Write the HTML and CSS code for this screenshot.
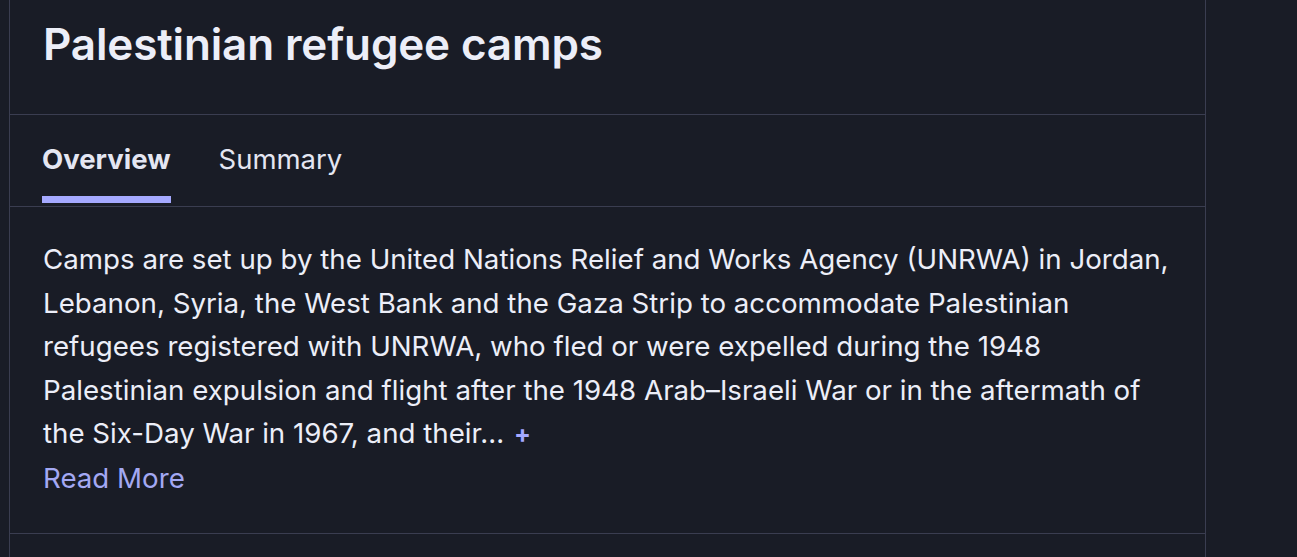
FILE: index.html
```html
<!DOCTYPE html>
<html lang="en">
<head>
<meta charset="utf-8">
<title>Palestinian refugee camps</title>
<link rel="stylesheet" href="styles.css">
</head>
<body>
<main class="card">
  <header class="card-head">
    <h1 class="title">Palestinian refugee camps</h1>
  </header>
  <nav class="tabs">
    <div class="tab tab-active"><span class="tab-label">Overview</span><span class="tab-bar"></span></div>
    <div class="tab"><span class="tab-label">Summary</span><span class="tab-bar"></span></div>
  </nav>
  <section class="body">
    <p class="text">Camps are set up by the United Nations Relief and Works Agency (UNRWA) in Jordan, Lebanon, Syria, the West Bank and the Gaza Strip to accommodate Palestinian refugees registered with UNRWA, who fled or were expelled during the 1948 Palestinian expulsion and flight after the 1948 Arab–Israeli War or in the aftermath of the Six-Day War in 1967, and their… <span class="plus">+</span></p>
    <a class="more" href="#">Read More</a>
  </section>
  <section class="next"></section>
</main>
</body>
</html>
```

FILE: styles.css
```css
html, body {
  margin: 0;
  padding: 0;
  background: #191c26;
  height: 100%;
  overflow: hidden;
}
body {
  font-family: Inter, "Noto Sans", sans-serif;
  color: #eceef8;
}
.card {
  margin-left: 9px;
  width: 1197px;
  box-sizing: border-box;
  border-left: 1px solid #3a3d50;
  border-right: 1px solid #3a3d50;
  min-height: 100%;
}
.card-head {
  padding: 18px 33px 43px;
  border-bottom: 1px solid #3a3d50;
}
.title {
  margin: 0;
  font-size: 44px;
  line-height: 53px;
  font-weight: 600;
  color: #eceef8;
  letter-spacing: -0.15px;
}
.tabs {
  display: flex;
  gap: 46px;
  padding: 26px 33px 3px 31px;
  border-bottom: 1px solid #3a3d50;
}
.tab {
  display: flex;
  flex-direction: column;
  padding: 0 1px;
}
.tab-label {
  font-size: 27.5px;
  line-height: 36px;
  font-weight: 400;
  color: #e4e6f2;
  margin-bottom: 19px;
}
.tab-active .tab-label {
  font-weight: 700;
}
.tab-bar {
  height: 7px;
  background: transparent;
}
.tab-active .tab-bar {
  background: #a5a9ff;
}
.body {
  padding: 31px 33px 33px;
  border-bottom: 1px solid #3a3d50;
}
.text {
  margin: 0;
  font-size: 27.7px;
  line-height: 43.5px;
  color: #eceef8;
}
.plus {
  color: #a5a9ff;
  font-weight: 700;
  font-size: 25px;
  margin-left: 2px;
}
.more {
  display: block;
  font-size: 27.7px;
  line-height: 43.5px;
  color: #a3a8f3;
  text-decoration: none;
}
.next {
  height: 40px;
}
```
